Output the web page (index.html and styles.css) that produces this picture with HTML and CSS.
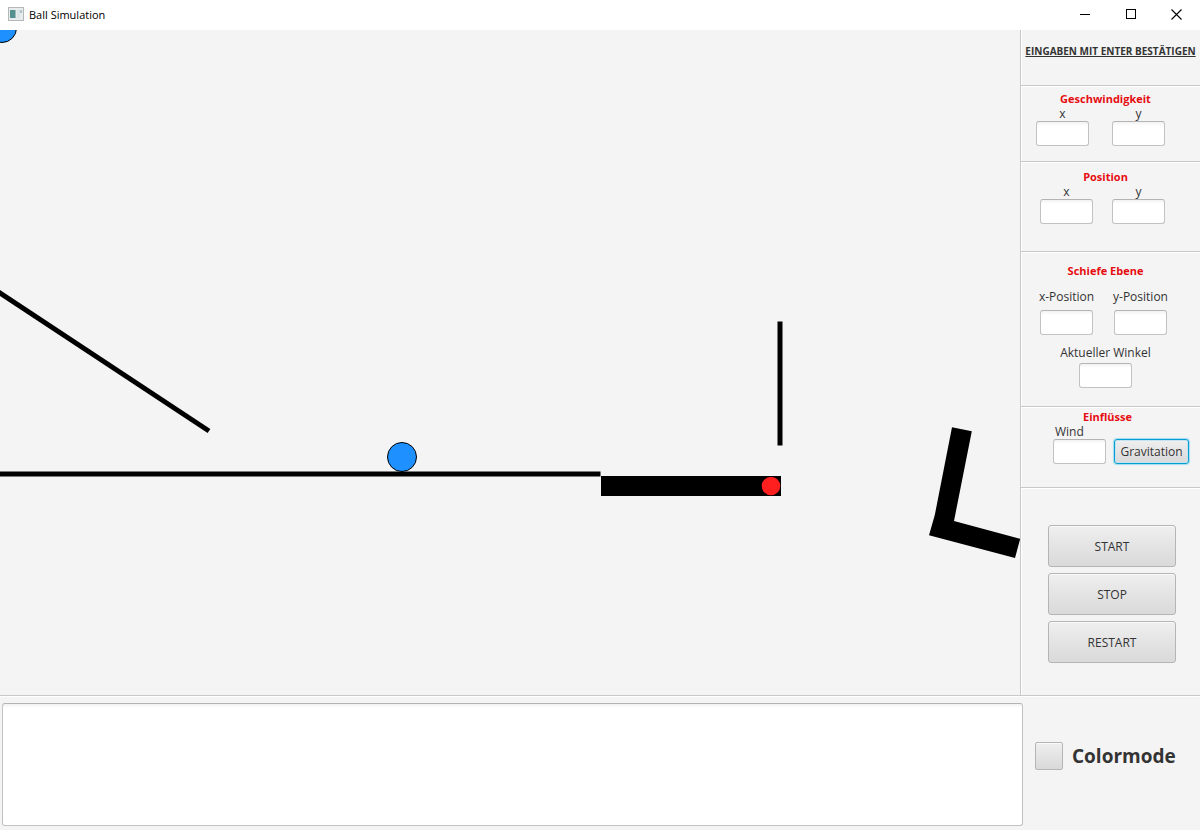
FILE: index.html
```html
<!DOCTYPE html>
<html lang="de">
<head>
<meta charset="utf-8">
<title>Ball Simulation</title>
<link rel="stylesheet" href="styles.css">
</head>
<body>
<div class="window">
  <header class="titlebar">
    <svg class="app-icon" width="16" height="14" viewBox="0 0 16 14" aria-hidden="true">
      <rect x="0.5" y="0.5" width="15" height="13" fill="#e9ecec" stroke="#b4b6b8"/>
      <rect x="2" y="3" width="5" height="8" fill="#56908f"/>
      <rect x="7" y="3" width="1" height="8" fill="#9fb9bd"/>
      <rect x="9" y="3" width="3" height="8" fill="#dde4e8"/>
      <rect x="12" y="3" width="2" height="3" fill="#a9c4cc"/>
    </svg>
    <h1 class="window-title">Ball Simulation</h1>
    <div class="window-controls">
      <button class="window-button" aria-label="Minimieren"><svg width="12" height="11" viewBox="0 0 12 11"><path d="M1 5.5H11" stroke="#000"/></svg></button>
      <button class="window-button" aria-label="Maximieren"><svg width="12" height="11" viewBox="0 0 12 11"><rect x="1.5" y="0.5" width="9" height="9" fill="none" stroke="#000"/></svg></button>
      <button class="window-button" aria-label="Schließen"><svg width="12" height="11" viewBox="0 0 12 11"><path d="M0.5 0.5L10.5 10.5M10.5 0.5L0.5 10.5" stroke="#000" stroke-width="1.1"/></svg></button>
    </div>
  </header>

  <main class="workspace">
    <svg class="scene" viewBox="0 0 1020 665" preserveAspectRatio="xMinYMin meet" role="img" aria-label="Simulation">
      <circle class="ball" cx="2" cy="-2" r="14.5"/>
      <path class="ramp" d="M-6 259L209 401"/>
      <path class="ramp" d="M-5 444H600.5"/>
      <path class="ramp" d="M780 291.5V415.5"/>
      <rect x="601" y="446" width="180" height="20"/>
      <circle class="target" cx="771" cy="456" r="9.3"/>
      <path d="M952 397.3L971.8 401.3L954 491L1020.2 508.8L1015 528L929 505.2L934.8 485Z"/>
      <circle class="ball" cx="402" cy="427" r="14.5"/>
    </svg>

    <aside class="sidebar">
      <section class="group group-notice"><p class="notice">EINGABEN MIT ENTER BESTÄTIGEN</p></section>

      <section class="group group-velocity">
        <h2 class="group-title">Geschwindigkeit</h2>
        <div class="fields">
          <label class="field">x<input class="input" type="text"></label>
          <label class="field">y<input class="input" type="text"></label>
        </div>
      </section>

      <section class="group group-position">
        <h2 class="group-title">Position</h2>
        <div class="fields">
          <label class="field">x<input class="input" type="text"></label>
          <label class="field">y<input class="input" type="text"></label>
        </div>
      </section>

      <section class="group group-plane">
        <h2 class="group-title">Schiefe Ebene</h2>
        <div class="fields">
          <label class="field">x-Position<input class="input" type="text"></label>
          <label class="field">y-Position<input class="input" type="text"></label>
        </div>
        <label class="field angle">Aktueller Winkel<input class="input" type="text"></label>
      </section>

      <section class="group group-forces">
        <h2 class="group-title">Einflüsse</h2>
        <div class="fields">
          <label class="field field-start"><span class="field-name">Wind</span><input class="input" type="text"></label>
          <button class="button button-focused">Gravitation</button>
        </div>
      </section>

      <section class="group group-actions">
        <button class="button button-large">START</button>
        <button class="button button-large">STOP</button>
        <button class="button button-large">RESTART</button>
      </section>
    </aside>
  </main>

  <footer class="console">
    <textarea class="output" aria-label="Ausgabe"></textarea>
    <label class="colormode"><input class="check" type="checkbox">Colormode</label>
  </footer>
</div>
</body>
</html>
```
FILE: styles.css
```css
* { box-sizing: border-box; }

body {
  margin: 0;
  background: #f4f4f4;
  color: #333;
  font: 12px/15px "Open Sans", "Noto Sans", sans-serif;
}

h1, h2, p { margin: 0; }

button, input, textarea { font: inherit; color: inherit; }

.window {
  display: flex;
  flex-direction: column;
  min-height: 100vh;
}

.titlebar {
  display: flex;
  align-items: center;
  height: 30px;
  padding: 0 0 2px 8px;
  gap: 5px;
  background: #fff;
  color: #000;
}

.app-icon { display: block; }

.window-title {
  flex: 1;
  font-size: 11px;
  font-weight: 400;
}

.window-controls { display: flex; }

.window-button {
  display: grid;
  place-items: center;
  width: 46px;
  height: 28px;
  padding: 0;
  border: 0;
  background: none;
}

.workspace {
  flex: 1;
  display: grid;
  grid-template-columns: minmax(0, 1fr) 180px;
}

.scene {
  display: block;
  width: 100%;
}

.ball { fill: #1e90ff; stroke: #000; }
.target { fill: #ff1f1f; }
.ramp { fill: none; stroke: #000; stroke-width: 5; }

.sidebar {
  display: flex;
  flex-direction: column;
  border-left: 1px solid #c8c8c8;
  box-shadow: inset 1px 0 #fff;
}

.group {
  padding-right: 10px;
  border-bottom: 1px solid #c8c8c8;
  box-shadow: 0 1px #fff;
}

.group-notice { min-height: 56px; padding: 14px 4px 0; }
.group-velocity { min-height: 76px; padding-top: 5px; }
.group-position { min-height: 90px; padding-top: 7px; }
.group-plane { min-height: 155px; padding-top: 11px; }
.group-forces { min-height: 81px; padding-top: 2px; }

.group-actions {
  flex: 1;
  display: flex;
  flex-direction: column;
  align-items: center;
  gap: 6px;
  padding: 37px 0 0 3px;
  border-bottom: 0;
}

.notice {
  font-size: 10px;
  font-weight: 700;
  text-align: center;
  text-decoration: underline;
  white-space: nowrap;
}

.group-title {
  color: #e60c10;
  font-size: 11px;
  line-height: 15px;
  font-weight: 700;
  text-align: center;
}

.group-forces .group-title { padding-left: 4px; }

.fields { display: flex; align-items: flex-end; }

.group-velocity .fields { padding-left: 15px; gap: 23px; }
.group-position .fields { padding-left: 19px; gap: 19px; }
.group-plane .fields { padding: 11px 0 10px 19px; gap: 21px; }
.group-forces .fields { padding-left: 32px; gap: 8px; }

.field {
  display: flex;
  flex-direction: column;
  align-items: center;
  width: 53px;
  white-space: nowrap;
}

.field-start { align-items: flex-start; }
.field-name { padding-left: 2px; }
.group-plane .fields .field { gap: 6px; }
.group-plane .angle { width: auto; gap: 3px; }

.input {
  width: 53px;
  height: 25px;
  padding: 0 6px;
  border: 1px solid #c2c2c2;
  border-top-color: #b4b4b4;
  border-radius: 3px;
  background: linear-gradient(#f2f2f2, #fff 4px);
}

.button {
  padding: 0;
  border: 1px solid #b5b5b5;
  border-radius: 3px;
  background: linear-gradient(#efefef, #d9d9d9);
  box-shadow: inset 0 1px #fafafa;
}

.button-large { width: 128px; height: 42px; }

.button-focused {
  width: 75px;
  height: 25px;
  border-color: #039ed3;
  box-shadow: 0 0 1px 1px #a5dcf0, inset 0 0 0 1px #c3e3ef;
}

.console {
  display: grid;
  grid-template-columns: minmax(0, 1fr) 165px;
  gap: 12px;
  height: 135px;
  padding: 7px 0 4px 2px;
  border-top: 1px solid #c8c8c8;
  box-shadow: inset 0 1px #fff;
}

.output {
  display: block;
  width: 100%;
  height: 100%;
  padding: 6px;
  border: 1px solid #c2c2c2;
  border-top-color: #b4b4b4;
  border-radius: 3px;
  background: linear-gradient(#f2f2f2, #fff 4px);
  resize: none;
}

.colormode {
  display: flex;
  align-items: center;
  gap: 9px;
  padding-bottom: 17px;
  font-size: 19px;
  line-height: 26px;
  font-weight: 700;
}

.check {
  appearance: none;
  width: 28px;
  height: 28px;
  margin: 0;
  border: 1px solid #b5b5b5;
  border-radius: 2px;
  background: linear-gradient(#efefef, #d9d9d9);
  box-shadow: inset 0 1px #fafafa;
}

.check:checked { background: #666; }
```
